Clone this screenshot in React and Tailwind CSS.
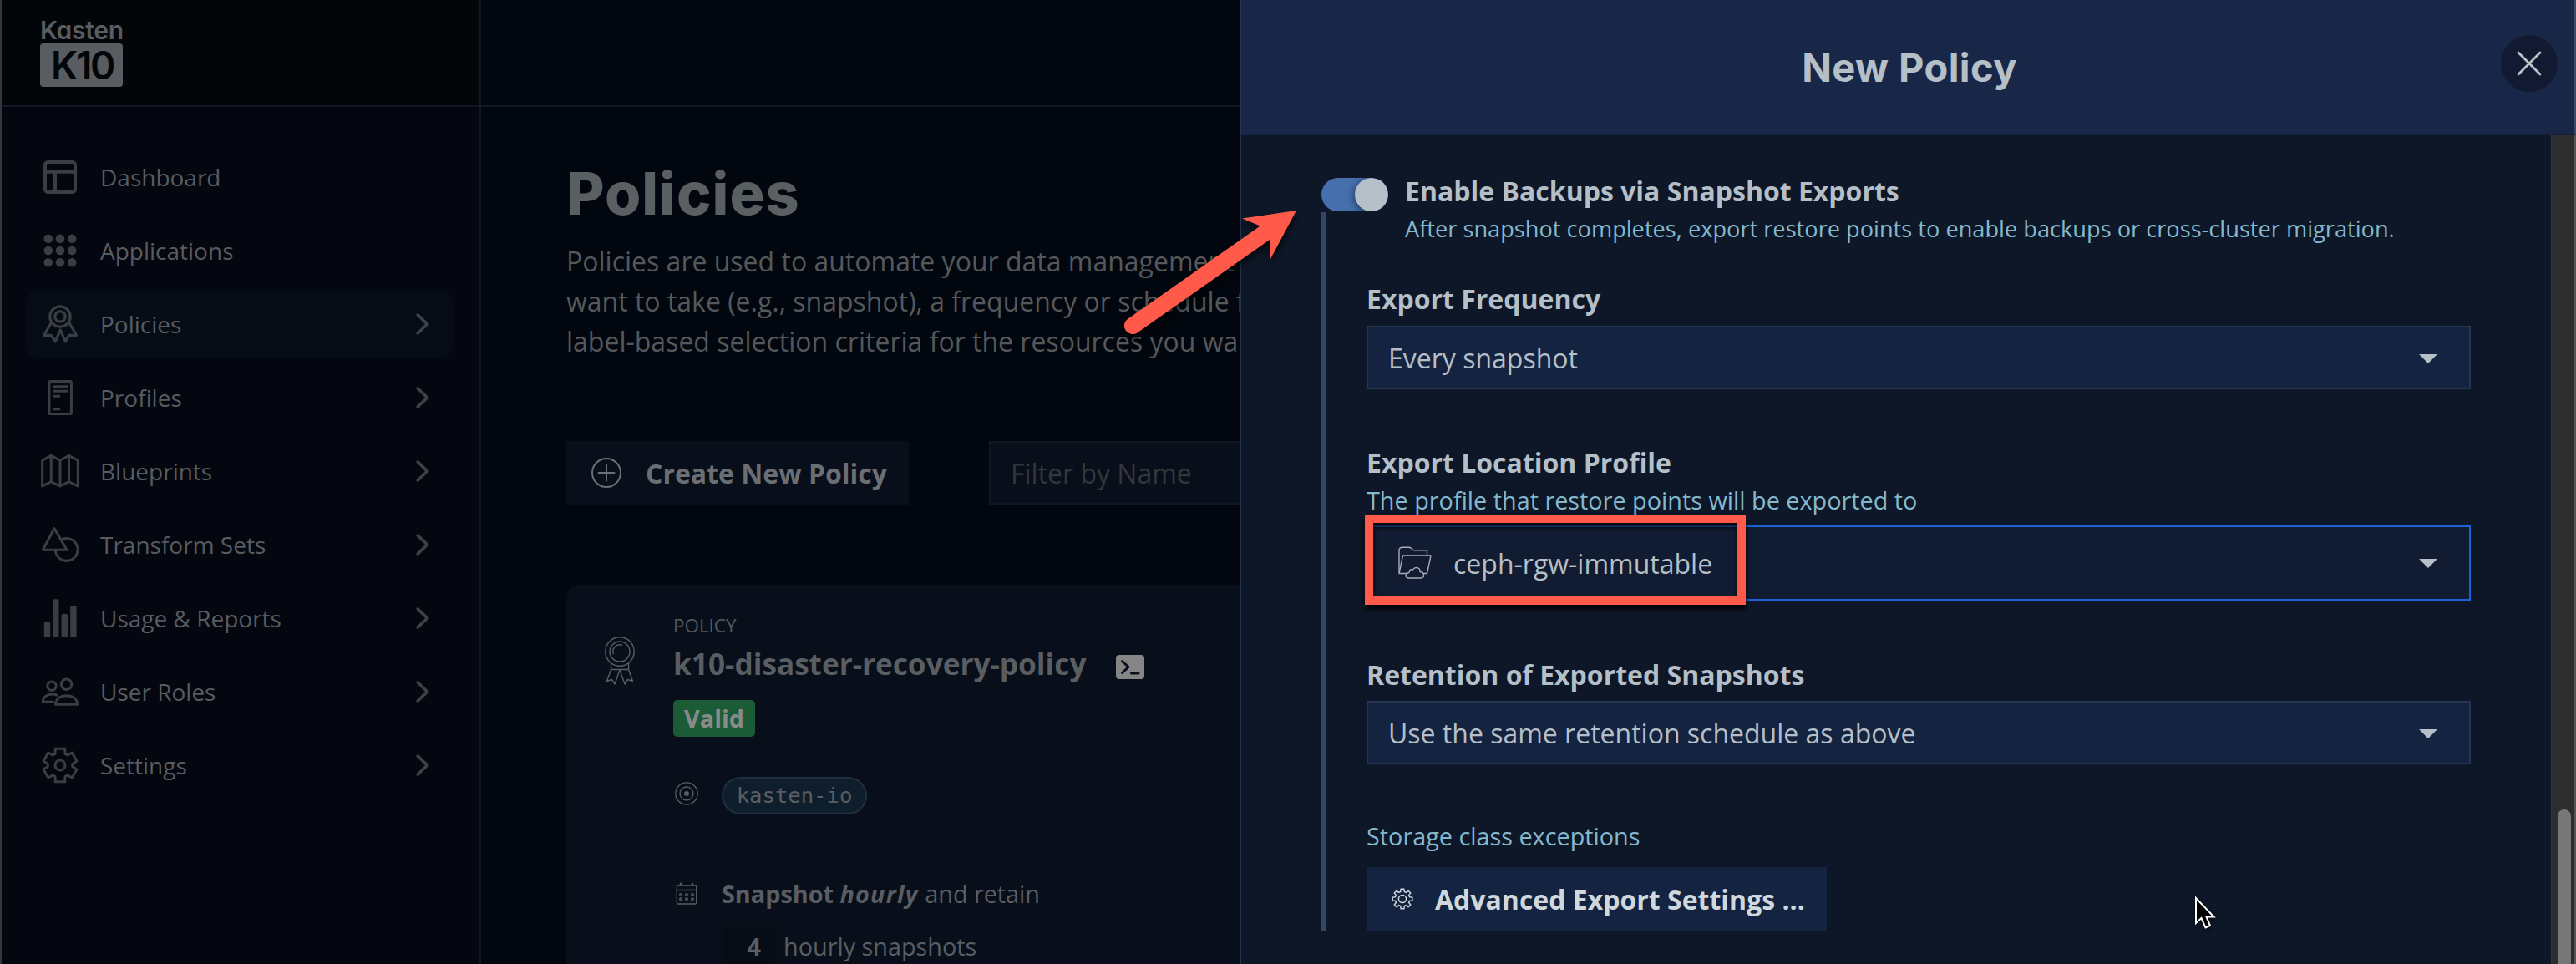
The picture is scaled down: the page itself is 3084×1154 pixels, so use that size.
import React from 'react';

// Outline of a gear centred on (c, c)
function gearPath(c, teeth, rOut, rIn, outHalf, inHalf) {
  const pts = [];
  for (let i = 0; i < teeth; i++) {
    const a = (360 / teeth) * i - 90;
    [[rIn, -inHalf], [rOut, -outHalf], [rOut, outHalf], [rIn, inHalf]].forEach(([r, d]) => {
      const t = ((a + d) * Math.PI) / 180;
      pts.push(`${(c + r * Math.cos(t)).toFixed(2)} ${(c + r * Math.sin(t)).toFixed(2)}`);
    });
  }
  return `M${pts.join('L')}Z`;
}

const NavSvg = ({ children, sw = 3 }) => (
  <svg className="h-12 w-12 shrink-0 text-[#3a3d41]" viewBox="0 0 48 48" fill="none" stroke="currentColor" strokeWidth={sw} strokeLinejoin="round" strokeLinecap="round">
    {children}
  </svg>
);

const icons = {
  dashboard: (
    <NavSvg sw={4}>
      <rect x="6" y="6" width="36" height="36" rx="3.5" />
      <path d="M6 17.7H42M18 17.7V42" strokeLinecap="butt" />
    </NavSvg>
  ),
  applications: (
    <NavSvg>
      {[9.8, 24, 38.2].map((y) => [9.8, 24, 38.2].map((x) => <circle key={`${x}-${y}`} cx={x} cy={y} r="5.3" fill="currentColor" stroke="none" />))}
    </NavSvg>
  ),
  policies: (
    <NavSvg sw={3.2}>
      <circle cx="24" cy="15" r="12.2" />
      <circle cx="24" cy="15" r="6.2" />
      <path d="M13.2 22.7L4.6 37.3H13.2L18.2 45L24.4 31L30.2 45L34.8 37.3H43.6L35 22.7" />
    </NavSvg>
  ),
  profiles: (
    <NavSvg>
      <rect x="10.9" y="4.5" width="26.5" height="39" rx="1" />
      <path d="M15 10.7H33M15 16.3H33M15 22.3H24M15 37.7H24" strokeLinecap="butt" />
    </NavSvg>
  ),
  blueprints: (
    <NavSvg>
      <path d="M2.7 11.2L13.2 5.3L24 11.3L34.5 5.3L45.3 11.2V42L34.5 36.7L24 42L13.2 36.7L2.7 42ZM13.2 5.3V36.7M24 11.3V42M34.5 5.3V36.7" />
    </NavSvg>
  ),
  transforms: (
    <NavSvg>
      <path d="M17 4.5L3.4 30.3H32L17 4.5Z" />
      <path d="M26 17.8A13.4 13.4 0 1 1 18.3 31" />
    </NavSvg>
  ),
  usage: (
    <NavSvg>
      <g fill="currentColor" stroke="none">
        <rect x="4.8" y="28.3" width="7.4" height="18.4" rx="1.5" />
        <rect x="15.1" y="1.3" width="7.4" height="45.4" rx="1.5" />
        <rect x="25.6" y="19" width="7.4" height="27.7" rx="1.5" />
        <rect x="36.2" y="9" width="7.4" height="37.7" rx="1.5" />
      </g>
    </NavSvg>
  ),
  roles: (
    <NavSvg>
      <circle cx="14" cy="17.3" r="5.2" />
      <circle cx="31.6" cy="15.3" r="6.3" />
      <path d="M18.5 39.2C18.5 33 24 28.7 31.6 28.7S44.7 33 44.7 39.2Z" />
      <path d="M20 28.2C18.5 27.5 16.5 27.1 14.5 27.1C8 27.1 3.2 31 3.2 36.2H15.5" />
    </NavSvg>
  ),
  settings: (
    <NavSvg>
      <path d={gearPath(24, 6, 20.6, 14.8, 16, 24)} />
      <circle cx="24" cy="24" r="6" />
    </NavSvg>
  ),
};

const nav = [
  { label: 'Dashboard', icon: 'dashboard' },
  { label: 'Applications', icon: 'applications' },
  { label: 'Policies', icon: 'policies', more: true, active: true },
  { label: 'Profiles', icon: 'profiles', more: true },
  { label: 'Blueprints', icon: 'blueprints', more: true },
  { label: 'Transform Sets', icon: 'transforms', more: true },
  { label: 'Usage & Reports', icon: 'usage', more: true },
  { label: 'User Roles', icon: 'roles', more: true },
  { label: 'Settings', icon: 'settings', more: true },
];

function Sidebar() {
  return (
    <aside className="flex w-[574px] shrink-0 flex-col border-r-2 border-[#101827] bg-[#04070f]">
      <div className="h-32 shrink-0 border-b-2 border-[#101827] bg-[#030609] pt-5 pl-[46px]">
        <div className="h-8 font-['Inter',sans-serif] text-[30px] leading-8 font-semibold tracking-[-0.3px] text-[#595c61] [font-feature-settings:'cv11']">Kasten</div>
        <div className="flex h-[52px] w-[99px] items-center justify-center rounded bg-[#595c61] pl-0.5 font-['Inter',sans-serif] text-[46px] leading-[52px] font-semibold tracking-[-2.4px] text-[#030609]">K10</div>
      </div>
      <nav className="flex flex-col gap-2 pt-11 pl-[30px]">
        {nav.map((n) => (
          <div key={n.label} className={`flex h-20 w-[510px] items-center rounded-xl pr-7 pl-4 text-[28px] text-[#585b5f] ${n.active ? 'bg-[#050c15]' : ''}`}>
            {icons[n.icon]}
            <span className="ml-6 flex-1">{n.label}</span>
            {n.more && (
              <svg className="h-[26px] w-4 text-[#3e4145]" viewBox="0 0 16 26" fill="none" stroke="currentColor" strokeWidth="3.6" strokeLinecap="round" strokeLinejoin="round">
                <path d="M2.2 2L13.6 13L2.2 24" />
              </svg>
            )}
          </div>
        ))}
      </nav>
    </aside>
  );
}

function PolicyCard() {
  return (
    <section className="mt-24 flex h-[520px] w-[1600px] items-start rounded-2xl bg-[#080f1b] pl-[46px] text-[#5a5e62]">
      <svg className="mt-[62px] h-[58px] w-9 shrink-0" viewBox="0 0 36 58" fill="none" stroke="currentColor" strokeWidth="1.4" strokeLinejoin="round">
        <circle cx="18" cy="18" r="17.2" />
        <circle cx="18" cy="18" r="12" />
        <path d="M10.5 21A8 8 0 0 1 21 10.5" />
        <path d="M7.5 32V39.5H28.5V32M7.5 39.5L2.5 53.5L8.5 51.5L12 57L18 40L24 57L27.5 51.5L33.5 53.5L28.5 39.5" />
      </svg>
      <div className="ml-[46px] flex flex-col items-start pt-[33px] whitespace-nowrap">
        <div className="text-[22.4px] leading-8 text-[#54585c]">POLICY</div>
        <div className="mt-[5px] flex h-12 items-center gap-9">
          <h2 className="text-[35.2px] leading-[48px] font-bold">k10-disaster-recovery-policy</h2>
          <svg className="mt-2 h-[29px] w-[34px]" viewBox="0 0 34 29" fill="none">
            <rect width="34" height="29" rx="4" fill="#858585" />
            <path d="M7.5 7.5L15 14.5L7.5 21.5M18.5 22H27" stroke="#080f1b" strokeWidth="3" strokeLinecap="round" strokeLinejoin="round" />
          </svg>
        </div>
        <div className="mt-5 flex h-11 w-[98px] items-center justify-center rounded-[5px] bg-[#1b5c36] text-[28.8px] font-bold text-[#8a8a8a]">Valid</div>
        <div className="mt-12 ml-0.5 flex h-[45px] items-center gap-7">
          <svg className="-mt-[5px] h-7 w-7" viewBox="0 0 28 28" fill="none" stroke="currentColor" strokeWidth="1.3">
            <circle cx="14" cy="14" r="13.2" />
            <circle cx="14" cy="14" r="8" />
            <circle cx="14" cy="14" r="3" fill="currentColor" stroke="none" />
          </svg>
          <span className="flex h-[45px] w-[174px] items-center justify-center rounded-full border-2 border-[#1f2f3d] bg-[#0f1e2d] font-['DejaVu_Sans_Mono',monospace] text-[25.6px]">kasten-io</span>
        </div>
        <div className="mt-[71px] ml-0.5 flex h-12 items-center gap-7 text-[28.8px]">
          <svg className="h-7 w-7" viewBox="0 0 28 28" fill="none" stroke="currentColor" strokeWidth="1.3">
            <rect x="2.3" y="4" width="23.4" height="22" rx="1.5" />
            <path d="M2.3 9.5H25.7M5.5 4L7 1.2L8.5 4M19.5 4L21 1.2L22.5 4" />
            {[15, 20.3].map((y) => [7, 14, 21].map((x) => <circle key={`${x}-${y}`} cx={x} cy={y} r="1.3" />))}
          </svg>
          <span>
            <b>Snapshot <i className="tracking-[1.2px]">hourly</i></b><span className="tracking-[-0.05px]"> and retain</span>
          </span>
        </div>
        <div className="mt-[15px] ml-[58px] flex h-12 items-center gap-2.5 text-[28.8px] leading-[48px]">
          <b className="w-16 bg-[#070d17] pr-[17px] text-right">4</b>
          <span>hourly snapshots</span>
        </div>
      </div>
    </section>
  );
}

function Main() {
  return (
    <main className="flex min-w-0 flex-1 flex-col overflow-hidden bg-[#02060e]">
      <div className="h-32 shrink-0 border-b-2 border-[#101827]" />
      <div className="flex flex-col pt-[62px] pl-[102px] whitespace-nowrap">
        <h1 className="font-['Inter',sans-serif] text-[70px] leading-[84px] font-extrabold tracking-[1px] text-[#5a5f62]">Policies</h1>
        <p className="mt-[15px] text-[32px] leading-[48px] text-[#54585b]">
          Policies are used to automate your data management
          <br />
          want to take (e.g., snapshot), a frequency or schedule for
          <br />
          label-based selection criteria for the resources you want
        </p>
        <div className="mt-[95px] flex gap-24 text-[32px]">
          <button className="flex h-[76px] w-[410px] shrink-0 items-center gap-[29px] bg-[#080f1b] pl-[30px] font-bold text-[#6b6e72]">
            <svg className="h-9 w-9 shrink-0" viewBox="0 0 36 36" fill="none" stroke="currentColor" strokeWidth="2" strokeLinecap="round">
              <circle cx="18" cy="18" r="17" />
              <path d="M8.5 18H27.5M18 8.5V27.5" />
            </svg>
            <span className="pt-0.5">Create New Policy</span>
          </button>
          <div className="flex h-[76px] w-[640px] shrink-0 items-center border-2 border-[#101722] bg-[#080f1b] pt-0.5 pl-6 text-[#33373b]">Filter by Name</div>
        </div>
        <PolicyCard />
      </div>
    </main>
  );
}

const Caret = () => (
  <svg className="h-[11px] w-[22px]" viewBox="0 0 22 11">
    <path d="M0 0H22L11 11Z" fill="#b4bfc7" />
  </svg>
);

const Select = ({ children }) => (
  <div className="flex h-[76px] w-[1322px] items-center justify-between border-2 border-[#25344f] bg-[#14233f] pt-0.5 pr-[38px] pl-6 text-[32px] text-[#b4bfc7]">
    {children}
    <Caret />
  </div>
);

const Label = ({ children }) => <div className="text-[32px] leading-[44px] font-bold text-[#b4bfc7]">{children}</div>;

function Drawer() {
  return (
    <section className="flex w-[1600px] shrink-0 flex-col border-l-2 border-[#25334f] bg-[#0e1727]">
      <header className="relative flex h-[162px] shrink-0 items-center justify-center border-r-2 border-b-2 border-r-[#3c4969] border-b-[#15213d] bg-[#182748]">
        <h2 className="pl-1 font-['Inter',sans-serif] text-[47px] leading-none font-bold tracking-[0.4px] text-[#b4bfc7]">New Policy</h2>
        <button className="absolute top-[42px] right-5 flex h-[68px] w-[68px] items-center justify-center rounded-full bg-[#111a31]">
          <svg className="h-[30px] w-[30px]" viewBox="0 0 30 30" stroke="#bcc3c8" strokeWidth="2.8" strokeLinecap="round">
            <path d="M2 2L28 28M28 2L2 28" />
          </svg>
        </button>
      </header>
      <div className="flex min-h-0 flex-1">
        <div className="flex min-w-0 flex-1 flex-col pt-[45px] pl-24">
          <div className="flex items-start gap-5">
            <div className="mt-1.5 flex h-10 w-20 shrink-0 justify-end overflow-hidden rounded-full bg-[#456fad]">
              <div className="h-10 w-10 rounded-full bg-[#b4bfc7] shadow-[0_2px_10px_rgba(0,0,0,0.6)]" />
            </div>
            <div>
              <Label>Enable Backups via Snapshot Exports</Label>
              <div className="mt-[3px] text-[27.2px] leading-10 text-[#83b8cd]">After snapshot completes, export restore points to enable backups or cross-cluster migration.</div>
            </div>
          </div>
          <div className="-mt-10 flex h-[860px] flex-col items-start border-l-[6px] border-[#344666] pt-[82px] pl-12">
            <Label>Export Frequency</Label>
            <div className="mt-2.5"><Select>Every snapshot</Select></div>
            <div className="mt-[66px]"><Label>Export Location Profile</Label></div>
            <div className="mt-[3px] text-[28.8px] leading-10 text-[#83b8cd]">The profile that restore points will be exported to</div>
            <div className="relative mt-2.5 flex h-[90px] w-[1322px] items-center border-2 border-[#1c62d4] bg-[#111c32] pr-[38px] pl-9 text-[32px] text-[#b4bfc7]">
              <svg className="h-10 w-10 shrink-0" viewBox="0 0 40 40" fill="none" stroke="#a3adb6" strokeWidth="1.4" strokeLinejoin="round">
                <path d="M1 31V5C1 2.5 2.5 1.2 4.5 1.2H13C16 1.2 16.5 4.8 19 4.8H34.5V11" />
                <path d="M10 32.5H1L5.5 11H39L34.5 32.5H30" />
                <path d="M12.5 38C7.5 38 8.5 31.5 13 31.5C13.5 26 17.5 28 17.5 28C20 23.5 26.5 25.5 26 30.5C31.5 30.5 32 38 27.5 38Z" />
              </svg>
              <span className="ml-[26px] flex-1 pt-0.5">ceph-rgw-immutable</span>
              <Caret />
              <div className="absolute -top-[15px] -left-1 h-[108px] w-[456px] border-10 border-[#ff5a4a] drop-shadow-[0_5px_3px_rgba(0,0,0,0.9)]" />
            </div>
            <div className="mt-[67px]"><Label>Retention of Exported Snapshots</Label></div>
            <div className="mt-[9px]"><Select>Use the same retention schedule as above</Select></div>
            <div className="mt-[66px] text-[28.8px] leading-10 text-[#83b8cd]">Storage class exceptions</div>
            <button className="mt-[17px] flex h-[76px] w-[551px] shrink-0 items-center gap-[26px] bg-[#14233f] pl-[30px] text-[32px] font-bold whitespace-nowrap text-[#d0d8de]">
              <svg className="h-[26px] w-[26px] shrink-0" viewBox="0 0 26 26" fill="none" stroke="currentColor" strokeWidth="1.5" strokeLinejoin="round">
                <path d={gearPath(13, 8, 12, 8.8, 9, 15)} />
                <circle cx="13" cy="13" r="4.6" />
              </svg>
              <span className="pt-0.5">Advanced Export Settings ...</span>
            </button>
          </div>
        </div>
        <div className="flex w-[30px] shrink-0 items-end justify-center border-r-2 border-l border-r-[#555555] border-l-[#353535] bg-[#2d2d2d]">
          <div className="ml-[3px] h-[185px] w-4 rounded-t-full bg-[#777777]" />
        </div>
      </div>
    </section>
  );
}

export default function App() {
  return (
    <div className="relative flex h-[1154px] w-[3084px] overflow-hidden border-l-2 border-[#34373b] bg-[#02060e] font-['Open_Sans',sans-serif]">
      <Sidebar />
      <Main />
      <Drawer />
      <svg className="absolute top-[235px] left-[1328px] h-[190px] w-[240px] drop-shadow-[0_5px_4px_rgba(0,0,0,0.7)]" viewBox="1330 235 240 190">
        <path d="M1350.2 381.8L1508.7 270.5L1487 261.5L1552 252L1521 310L1520 287L1361.8 398.2A10 10 0 0 1 1350.2 381.8Z" fill="#ff5a4a" />
      </svg>
      <svg className="absolute top-[1070px] left-[2624px] h-[46px] w-[36px] drop-shadow-[0_2px_2px_rgba(0,0,0,0.5)]" viewBox="0 0 36 46">
        <path d="M3 5V35L9.5 29L14.5 40.5L20 38L15.5 27.5H24.5Z" fill="#000" stroke="#fff" strokeWidth="2" strokeLinejoin="miter" />
      </svg>
    </div>
  );
}
